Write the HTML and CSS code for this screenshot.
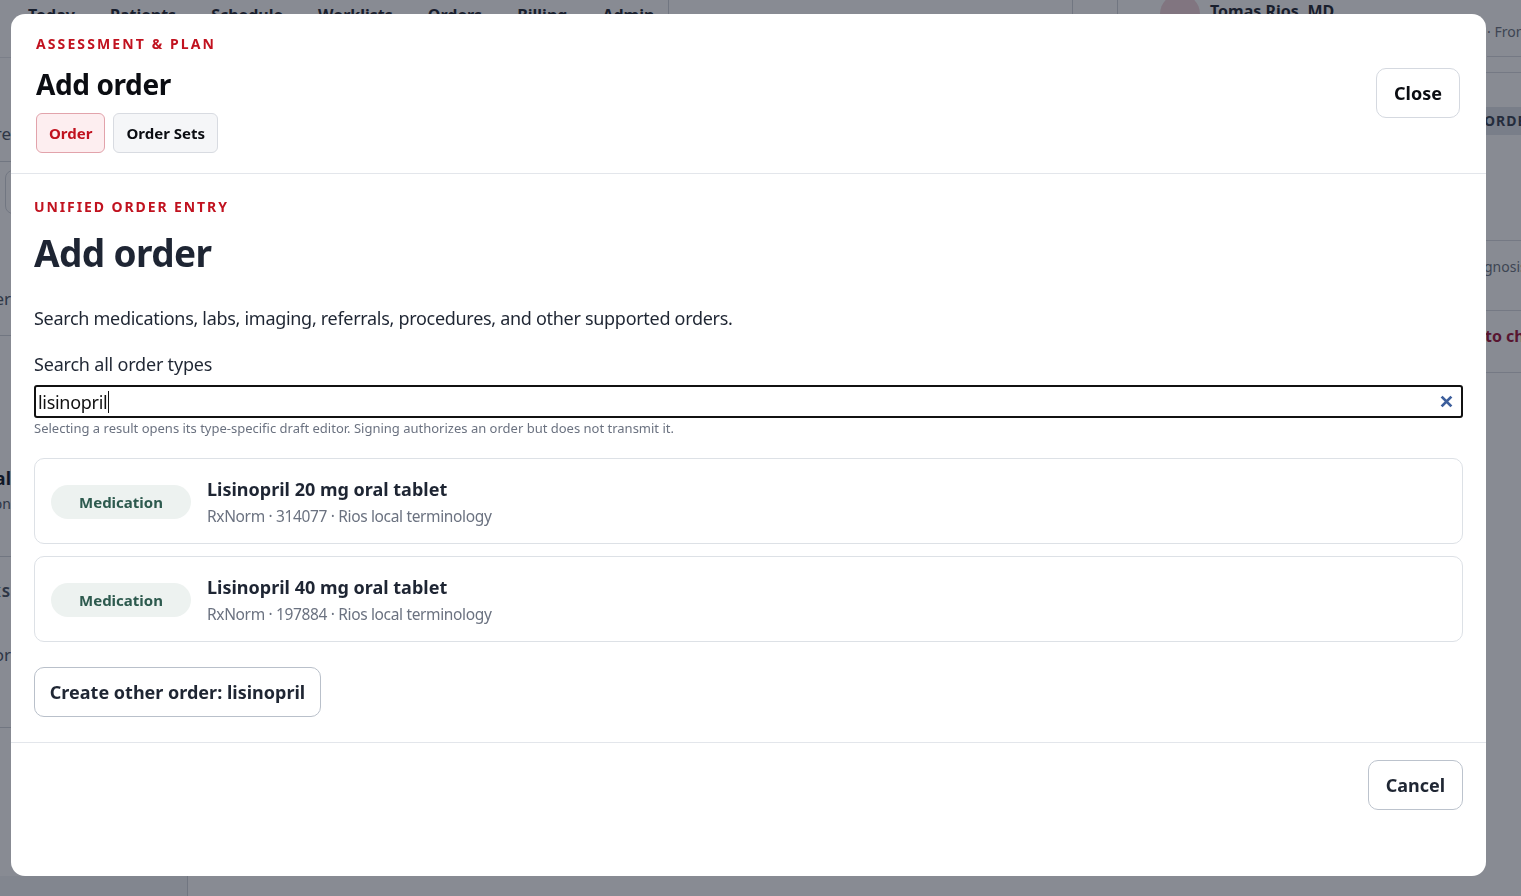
FILE: index.html
```html
<!DOCTYPE html>
<html lang="en">
<head>
<meta charset="utf-8">
<title>Add order</title>
<link rel="stylesheet" href="styles.css">
</head>
<body>
<div class="app">
  <header class="topnav">
    <nav class="navlinks">
      <span>Today</span><span>Patients</span><span>Schedule</span><span>Worklists</span><span>Orders</span><span>Billing</span><span>Admin</span>
    </nav>
    <div class="navsearch"></div>
    <div class="navbtn"></div>
    <div class="user">
      <span class="avatar"></span>
      <strong class="username">Tomas Rios, MD</strong>
    </div>
  </header>
  <div class="workspace">
    <div class="leftstrip">
      <div class="lrow line"></div>
      <div class="lrow t-a">Care</div>
      <div class="lrow t-n">Plan</div>
      <div class="lbox"></div>
      <div class="lrow t-nc">Encounter</div>
      <div class="lrow t-al">Clinical</div>
      <div class="lrow t-on">Reconciliation</div>
      <div class="lrow t-T">TASKS</div>
      <div class="lrow t-or">Favor</div>
    </div>
    <div class="stage"></div>
    <div class="rightstrip">
      <div class="rrow t-from">· Front</div>
      <div class="rrow rline"></div>
      <div class="rhead">ORDERS</div>
      <div class="rrow rblank"></div>
      <div class="rrow t-gnosis">gnosis</div>
      <div class="rrow t-toch">to chart</div>
    </div>
  </div>
  <div class="bottomstrip">
    <div class="bottombox"></div>
  </div>
</div>

<div class="overlay">
  <section class="modal" role="dialog" aria-label="Add order">
    <header class="modal-head">
      <div class="head-left">
        <div class="eyebrow">ASSESSMENT &amp; PLAN</div>
        <h2 class="head-title">Add order</h2>
        <div class="tabs">
          <button class="tab tab-active">Order</button>
          <button class="tab">Order Sets</button>
        </div>
      </div>
      <button class="btn btn-close">Close</button>
    </header>

    <div class="modal-body">
      <div class="eyebrow eyebrow-wide">UNIFIED ORDER ENTRY</div>
      <h1 class="page-title">Add order</h1>
      <p class="desc">Search medications, labs, imaging, referrals, procedures, and other supported orders.</p>
      <label class="field-label" for="q">Search all order types</label>
      <div class="search">
        <span class="search-text">lisinopril<span class="caret"></span></span>
        <svg class="clear" width="13" height="13" viewBox="0 0 12 12" aria-hidden="true"><path d="M1.5 1.5 L10.5 10.5 M10.5 1.5 L1.5 10.5" stroke="#3d5f9c" stroke-width="2.6"/></svg>
      </div>
      <div class="hint">Selecting a result opens its type-specific draft editor. Signing authorizes an order but does not transmit it.</div>

      <div class="results">
        <div class="result">
          <span class="badge">Medication</span>
          <div class="result-text">
            <div class="result-title">Lisinopril 20 mg oral tablet</div>
            <div class="result-sub">RxNorm · 314077 · Rios local terminology</div>
          </div>
        </div>
        <div class="result">
          <span class="badge">Medication</span>
          <div class="result-text">
            <div class="result-title">Lisinopril 40 mg oral tablet</div>
            <div class="result-sub">RxNorm · 197884 · Rios local terminology</div>
          </div>
        </div>
      </div>

      <button class="btn btn-other">Create other order: lisinopril</button>
    </div>

    <footer class="modal-foot">
      <button class="btn btn-cancel">Cancel</button>
    </footer>
  </section>
</div>
</body>
</html>
```

FILE: styles.css
```css
* { box-sizing: border-box; }

html, body {
  margin: 0;
  padding: 0;
  height: 100%;
}

body {
  font-family: "Noto Sans", "Open Sans", "Liberation Sans", sans-serif;
  color: #1f2633;
  background: #ffffff;
  overflow: hidden;
}

/* ---------- background app (dimmed) ---------- */
.app {
  height: 896px;
  display: flex;
  flex-direction: column;
}

.topnav {
  height: 14px;
  flex: none;
  overflow: hidden;
  display: flex;
  align-items: flex-start;
}

.navlinks {
  display: flex;
  gap: 35px;
  padding: 5px 0 0 28px;
  font-weight: 700;
  font-size: 16px;
  line-height: 20px;
  color: #1f2633;
  width: 668px;
  white-space: nowrap;
  overflow: hidden;
}

.navsearch {
  width: 405px;
  height: 40px;
  border-left: 1px solid #d1d5db;
  border-right: 1px solid #d1d5db;
}

.navbtn {
  width: 45px;
  height: 40px;
  border-right: 1px solid #d1d5db;
}

.user {
  display: flex;
  gap: 10px;
  margin-left: 42px;
}

.avatar {
  width: 40px;
  height: 40px;
  margin-top: -6px;
  border-radius: 50%;
  background: #f0d3d8;
}

.username {
  font-size: 16px;
  line-height: 20px;
  padding-top: 1px;
  color: #1f2633;
  white-space: nowrap;
}

.workspace {
  flex: 1;
  display: flex;
}

.leftstrip {
  width: 11px;
  flex: none;
  overflow: hidden;
  display: flex;
  flex-direction: column;
}

.lrow {
  display: flex;
  justify-content: flex-end;
  white-space: nowrap;
  font-size: 17px;
  line-height: 24px;
  color: #4b5563;
}

.lrow.line { height: 44px; border-bottom: 1px solid #e5e7eb; }
.t-a { margin-top: 64px; }
.t-n { margin-top: 6px; height: 10px; overflow: hidden; border-bottom: 1px solid #d1d5db; font-size: 15px; }
.lbox {
  width: 30px;
  height: 44px;
  margin: 8px 0 0 5px;
  border: 1px solid #d1d5db;
  border-radius: 8px;
  flex: none;
}
.t-nc { margin-top: 73px; padding-bottom: 24px; border-bottom: 1px solid #d1d5db; }
.t-al { margin-top: 130px; font-weight: 700; font-size: 18px; color: #111827; }
.t-on { margin-top: 2px; font-size: 14px; padding-bottom: 40px; border-bottom: 1px solid #d1d5db; }
.t-T { margin-top: 22px; font-weight: 700; letter-spacing: 1px; font-size: 15px; }
.t-or { margin-top: 40px; padding-bottom: 60px; border-bottom: 1px solid #d1d5db; }

.stage {
  width: 1475px;
  flex: none;
}

.rightstrip {
  flex: 1;
  overflow: hidden;
  display: flex;
  flex-direction: column;
}

.rrow {
  white-space: nowrap;
  font-size: 14px;
  color: #6b7280;
  border-bottom: 1px solid #d8dbe0;
}

.t-from { padding-top: 8px; height: 43px; margin-left: 1px; }
.rline { height: 16px; }
.rhead {
  margin-top: 34px;
  height: 28px;
  line-height: 28px;
  background: #e1e5ea;
  font-weight: 700;
  font-size: 14px;
  letter-spacing: 1px;
  color: #374151;
  white-space: nowrap;
  margin-left: -2px;
}
.rblank { height: 106px; }
.t-gnosis { padding-top: 16px; height: 70px; margin-left: -2px; }
.t-toch {
  padding-top: 14px;
  height: 62px;
  font-size: 16px;
  font-weight: 700;
  color: #9f1239;
  margin-left: -1px;
}

.bottomstrip {
  height: 20px;
  flex: none;
  display: flex;
}

.bottombox {
  width: 188px;
  border-right: 1px solid #d1d5db;
  background: #f3f4f6;
}

/* ---------- overlay & modal ---------- */
.overlay {
  position: fixed;
  inset: 0;
  background: rgba(17, 24, 39, 0.5);
  display: flex;
  align-items: flex-start;
  justify-content: flex-start;
  padding: 14px 0 0 11px;
}

.modal {
  width: 1475px;
  height: 862px;
  background: #ffffff;
  border-radius: 14px;
  display: flex;
  flex-direction: column;
  overflow: hidden;
}

.modal-head {
  display: flex;
  align-items: center;
  justify-content: space-between;
  padding: 20px 26px 20px 25px;
  border-bottom: 1px solid #e3e6eb;
}

.eyebrow {
  font-size: 14px;
  line-height: 20px;
  font-weight: 700;
  letter-spacing: 2.1px;
  color: #c1121f;
}

.head-title {
  margin: 12px 0 0 0;
  font-size: 28px;
  line-height: 36px;
  font-weight: 700;
  letter-spacing: -0.4px;
  color: #0b0d12;
}

.tabs {
  display: flex;
  gap: 8px;
  margin-top: 11px;
}

.tab {
  font-family: inherit;
  height: 40px;
  padding: 0 12px;
  font-size: 15px;
  font-weight: 700;
  border-radius: 6px;
  border: 1px solid #d8dbe1;
  background: #f5f6f8;
  color: #0b0d12;
  cursor: pointer;
}

.tab-active {
  background: #fdeef0;
  border-color: #e2a3ab;
  color: #c1121f;
}

.btn {
  font-family: inherit;
  font-weight: 700;
  font-size: 18px;
  background: #ffffff;
  color: #1f2633;
  border: 1px solid #c3c9d2;
  border-radius: 10px;
  height: 50px;
  padding: 0 18px;
  cursor: pointer;
}

.btn-close {
  width: 84px;
  padding: 0;
  border-color: #d5d9e0;
  color: #0b0d12;
  margin-top: -2px;
}

.modal-body {
  padding: 23px 23px 25px 23px;
  border-bottom: 1px solid #e3e6eb;
  display: flex;
  flex-direction: column;
  align-items: flex-start;
}

.eyebrow-wide {
  letter-spacing: 1.9px;
}

.page-title {
  margin: 13px 0 0 0;
  font-size: 37px;
  line-height: 46px;
  font-weight: 700;
  letter-spacing: -0.6px;
  color: #1e2533;
}

.desc {
  margin: 29px 0 0 0;
  font-size: 18px;
  line-height: 26px;
  letter-spacing: -0.3px;
  color: #1f2633;
}

.field-label {
  margin-top: 20px;
  font-size: 18px;
  line-height: 26px;
  letter-spacing: -0.2px;
  color: #1f2633;
}

.search {
  margin-top: 8px;
  width: 100%;
  height: 33px;
  border: 2px solid #111111;
  border-radius: 3px;
  display: flex;
  align-items: center;
  justify-content: space-between;
  padding: 0 8px 0 2px;
}

.search-text {
  font-size: 18px;
  letter-spacing: -0.3px;
  color: #111111;
  display: flex;
  align-items: center;
}

.caret {
  display: inline-block;
  width: 1px;
  height: 22px;
  background: #111111;
  margin-left: 1px;
}

.clear {
  display: block;
}

.hint {
  margin-top: 1px;
  font-size: 13px;
  line-height: 18px;
  color: #6b7280;
}

.results {
  width: 100%;
  margin-top: 21px;
  display: flex;
  flex-direction: column;
  gap: 12px;
}

.result {
  height: 86px;
  border: 1px solid #dde1e6;
  border-radius: 10px;
  display: flex;
  align-items: center;
  gap: 16px;
  padding: 0 16px;
}

.badge {
  width: 140px;
  height: 34px;
  border-radius: 17px;
  background: #edf2f0;
  color: #2d5a4e;
  font-size: 15px;
  font-weight: 700;
  display: flex;
  align-items: center;
  justify-content: center;
  margin-top: 1px;
}

.result-text {
  display: flex;
  flex-direction: column;
  gap: 4px;
  margin-top: 2px;
}

.result-title {
  font-size: 18px;
  line-height: 24px;
  font-weight: 700;
  color: #1e2533;
}

.result-sub {
  font-size: 15.5px;
  line-height: 22px;
  letter-spacing: -0.35px;
  color: #6b7280;
}

.btn-other {
  margin-top: 25px;
  width: 287px;
  padding: 0;
  border-color: #b9c0ca;
}

.modal-foot {
  flex: 1;
  display: flex;
  justify-content: flex-end;
  align-items: flex-start;
  padding: 17px 23px 0 0;
}

.btn-cancel {
  width: 95px;
  padding: 0;
  border-color: #bcc3cd;
}
```
